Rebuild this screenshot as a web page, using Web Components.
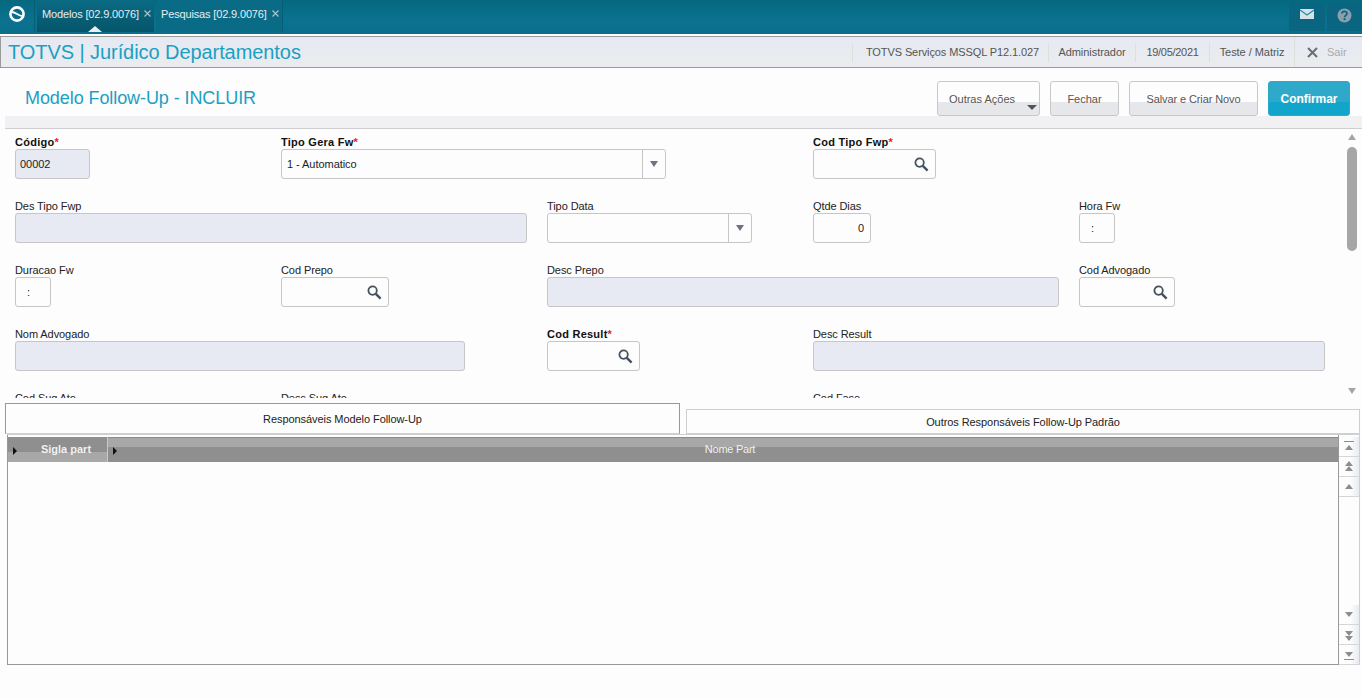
<!DOCTYPE html>
<html lang="pt">

<head>
  <meta charset="UTF-8">
  <title>TOTVS | Jurídico Departamentos</title>
  <style>
    html, body {
      margin: 0;
      height: 699px;
      overflow: hidden;
      background: #fdfdfd;
      font-family: "Liberation Sans", Arial, sans-serif;
    }
  </style>
</head>

<body>

  <top-bar>
    <nav-tab active>Modelos [02.9.0076]</nav-tab>
    <nav-tab>Pesquisas [02.9.0076]</nav-tab>
  </top-bar>

  <title-strip heading="TOTVS | Jurídico Departamentos">
    <strip-item style="width:196px;padding-left:4px;letter-spacing:-0.1px">TOTVS Serviços MSSQL P12.1.027</strip-item>
    <strip-item style="width:87px">Administrador</strip-item>
    <strip-item style="width:74px;letter-spacing:-0.3px">19/05/2021</strip-item>
    <strip-item style="width:85px">Teste / Matriz</strip-item>
  </title-strip>

  <page-header heading="Modelo Follow-Up - INCLUIR">
    <tool-button menu style="width:103px">Outras Ações</tool-button>
    <tool-button style="width:69px">Fechar</tool-button>
    <tool-button style="width:129px;letter-spacing:-0.1px">Salvar e Criar Novo</tool-button>
    <tool-button primary style="width:82px">Confirmar</tool-button>
  </page-header>

  <form-panel>
    <form-field label="Código" required disabled value="00002" width="75"></form-field>
    <form-field label="Tipo Gera Fw" required type="select" value="1 - Automatico" width="385" style="grid-column:2 / span 2"></form-field>
    <form-field label="Cod Tipo Fwp" required type="search" width="123" style="grid-column:4 / span 2"></form-field>

    <form-field label="Des Tipo Fwp" disabled width="512" style="grid-column:1 / span 2"></form-field>
    <form-field label="Tipo Data" type="select" width="205"></form-field>
    <form-field label="Qtde Dias" value="0" value-align="right" width="58"></form-field>
    <form-field label="Hora Fw" value=":" indent="7" width="36"></form-field>

    <form-field label="Duracao Fw" value=":" indent="7" width="36"></form-field>
    <form-field label="Cod Prepo" type="search" width="108"></form-field>
    <form-field label="Desc Prepo" disabled width="512" style="grid-column:3 / span 2"></form-field>
    <form-field label="Cod Advogado" type="search" width="96"></form-field>

    <form-field label="Nom Advogado" disabled width="450" style="grid-column:1 / span 2"></form-field>
    <form-field label="Cod Result" required type="search" width="93"></form-field>
    <form-field label="Desc Result" disabled width="512" style="grid-column:4 / span 2"></form-field>

    <form-field label="Cod Sug Ato" width="96"></form-field>
    <form-field label="Desc Sug Ato" disabled width="512" style="grid-column:2 / span 2"></form-field>
    <form-field label="Cod Fase" type="search" width="96"></form-field>
  </form-panel>

  <tab-strip>
    <folder-tab active style="width:675px">Responsáveis Modelo Follow-Up</folder-tab>
    <folder-tab style="width:674px">Outros Responsáveis Follow-Up Padrão</folder-tab>
  </tab-strip>

  <data-grid>
    <grid-head style="width:100px" first>Sigla part</grid-head>
    <grid-head style="flex:1">Nome Part</grid-head>
  </data-grid>

  <script>
    // Cada clase escribe su propio shadow root con el html y los estilos
    class BaseElement extends HTMLElement {
      render(html) {
        this.attachShadow({ mode: 'open' }).innerHTML = html;
      }
    }

    class TopBar extends BaseElement {
      constructor() {
        super();
        this.render(`
          <style>
            :host {
              display: flex;
              height: 34px;
              background: linear-gradient(#05687f, #0a7290 60%, #0a6e8c);
              color: #fff;
            }
            .logo {
              width: 35px;
              height: 32px;
              padding-top: 6px;
              display: flex;
              justify-content: center;
              border-right: 1px solid #075e74;
              margin-right: 2px;
              box-sizing: border-box;
            }
            .tabs { display: flex; gap: 2px; }
            .right { margin-left: auto; display: flex; gap: 2px; }
            .square {
              width: 35px;
              height: 28px;
              margin-top: 3px;
              padding-top: 5px;
              box-sizing: border-box;
              background: #0a6580;
              display: flex;
              justify-content: center;
            }
            .mail { width: 36px; padding-top: 6px; }
          </style>
          <div class="logo">
            <svg width="16" height="16" viewBox="0 0 16 16">
              <circle cx="8" cy="8" r="6.6" fill="none" stroke="#fff" stroke-width="2.6"/>
              <path d="M2.5 6C6 5.5 10 10.5 13.5 10" fill="none" stroke="#fff" stroke-width="2"/>
            </svg>
          </div>
          <div class="tabs"><slot></slot></div>
          <div class="right">
            <div class="square mail">
              <svg width="14" height="10" viewBox="0 0 14 10">
                <path d="M0 0H14V10H0Z" fill="#d5e3e8"/>
                <path d="M0 1L7 6L14 1" fill="none" stroke="#2f8aa3" stroke-width="1.2"/>
              </svg>
            </div>
            <div class="square">
              <svg width="15" height="15" viewBox="0 0 15 15">
                <circle cx="7.5" cy="7.5" r="7" fill="#8a9fae"/>
                <path d="M5 5.6 C5 2.6 10 2.6 10 5.5 C10 7.4 7.6 7.4 7.6 9.2" fill="none" stroke="#0a6580" stroke-width="1.8"/>
                <rect x="6.6" y="10.2" width="2" height="2" fill="#0a6580"/>
              </svg>
            </div>
          </div>
        `);
      }
    }

    class NavTab extends BaseElement {
      constructor() {
        super();
        this.render(`
          <style>
            :host {
              display: block;
              position: relative;
              height: 32px;
              box-sizing: border-box;
              padding: 8px 0 0 5px;
              font-size: 11px;
              letter-spacing: -0.15px;
              color: #e4eef1;
              white-space: nowrap;
              background: #0a6b86;
              border-right: 1px solid #075e74;
              width: 127px;
            }
            :host([active]) {
              width: 117px;
              background: linear-gradient(#0a6b84, #05556a);
              border-right: 0;
            }
            svg {
              position: absolute;
              top: 10px;
              right: 3px;
            }
            .notch { display: none; }
            :host([active]) .notch {
              display: block;
              position: absolute;
              left: 51px;
              bottom: 0;
              width: 0;
              height: 0;
              border: 7px solid transparent;
              border-top: 0;
              border-bottom: 6px solid #e9eef2;
            }
          </style>
          <slot></slot>
          <svg width="7" height="7" viewBox="0 0 7 7">
            <path d="M0.5 0.5L6.5 6.5M6.5 0.5L0.5 6.5" stroke="#a9c6d0" stroke-width="1.1"/>
          </svg>
          <span class="notch"></span>
        `);
      }
    }

    class TitleStrip extends BaseElement {
      constructor() {
        super();
        this.render(`
          <style>
            :host {
              display: flex;
              align-items: center;
              box-sizing: border-box;
              height: 32px;
              margin-top: 2px;
              border: 1px solid #9a9a9a;
              border-width: 1px 0 1px 1px;
              background: linear-gradient(#e6e9f2, #eaecef);
            }
            h1 {
              margin: 0 0 0 7px;
              font-size: 20px;
              letter-spacing: -0.07px;
              font-weight: normal;
              color: #1aa0c4;
              white-space: nowrap;
            }
            .items { margin-left: auto; display: flex; align-items: center; height: 100%; }
            .exit {
              width: 68px;
              height: 100%;
              border-left: 1px solid #d8e2d8;
              display: flex;
              align-items: center;
              box-sizing: border-box;
              padding-left: 12px;
              gap: 9px;
              color: #aaa;
              font-size: 11px;
            }
          </style>
          <h1>${this.getAttribute("heading")}</h1>
          <div class="items">
            <slot></slot>
            <div class="exit">
              <svg width="11" height="11" viewBox="0 0 11 11">
                <path d="M1 1L10 10M10 1L1 10" stroke="#6a6f75" stroke-width="2"/>
              </svg>
              <span>Sair</span>
            </div>
          </div>
        `);
      }
    }

    class StripItem extends BaseElement {
      constructor() {
        super();
        this.render(`
          <style>
            :host {
              display: flex;
              align-items: center;
              justify-content: center;
              box-sizing: border-box;
              height: 19px;
              border-left: 1px solid #d8e2d8;
              font-size: 11px;
              letter-spacing: -0.05px;
              color: #555;
              white-space: nowrap;
            }
          </style>
          <slot></slot>
        `);
      }
    }

    class PageHeader extends BaseElement {
      constructor() {
        super();
        this.render(`
          <style>
            :host {
              display: block;
              position: relative;
              height: 61px;
            }
            .row {
              display: flex;
              align-items: flex-end;
              height: 48px;
              padding-right: 12px;
              background: #fdfdfd;
            }
            h2 {
              margin: 0 auto 7px 25px;
              font-size: 18px;
              letter-spacing: -0.08px;
              font-weight: normal;
              color: #1aa0c4;
            }
            .buttons { display: flex; gap: 10px; }
            .band {
              height: 12px;
              margin-left: 5px;
              background: #f1f1f3;
              border-bottom: 1px solid #cfcfd3;
            }
          </style>
          <div class="row">
            <h2>${this.getAttribute("heading")}</h2>
            <div class="buttons"><slot></slot></div>
          </div>
          <div class="band"></div>
        `);
      }
    }

    class ToolButton extends BaseElement {
      constructor() {
        super();
        this.render(`
          <style>
            :host {
              display: flex;
              position: relative;
              align-items: center;
              justify-content: center;
              box-sizing: border-box;
              height: 35px;
              border: 1px solid #c8c8c8;
              border-radius: 3px;
              font-size: 11px;
              color: #555;
              white-space: nowrap;
              background: linear-gradient(#fdfdfd 60%, #e5e7ea 60%);
            }
            :host([menu]) { padding-right: 13px; }
            :host([primary]) {
              border-color: #2ea8c8;
              background: linear-gradient(#2fa9c9 60%, #12a5cb 60%);
              color: #fff;
              font-size: 12px;
              font-weight: bold;
              letter-spacing: -0.05px;
            }
            .caret {
              position: absolute;
              right: 2px;
              bottom: 5px;
              width: 0;
              height: 0;
              border: 5px solid transparent;
              border-bottom: 0;
              border-top: 5px solid #555;
            }
          </style>
          <slot></slot>
          ${this.hasAttribute("menu") ? '<span class="caret"></span>' : ""}
        `);
      }
    }

    class FormPanel extends BaseElement {
      constructor() {
        super();
        this.render(`
          <style>
            :host {
              display: block;
              position: relative;
              height: 269px;
              overflow: hidden;
            }
            .grid {
              display: grid;
              grid-template-columns: repeat(5, 266px);
              grid-auto-rows: 44px;
              row-gap: 20px;
              padding: 6px 0 0 15px;
            }
            .scroll {
              position: absolute;
              top: 0;
              right: 0;
              bottom: 0;
              width: 20px;
            }
            .up, .down {
              position: absolute;
              left: 6px;
              width: 0;
              height: 0;
              border: 4px solid transparent;
            }
            .up { top: 5px; border-top: 0; border-bottom: 6px solid #a6a6a6; }
            .down { bottom: 4px; border-bottom: 0; border-top: 6px solid #a6a6a6; }
            .thumb {
              position: absolute;
              left: 5px;
              top: 18px;
              width: 10px;
              height: 104px;
              border-radius: 5px;
              background: #a6a6a6;
            }
          </style>
          <div class="grid"><slot></slot></div>
          <div class="scroll">
            <span class="up"></span>
            <span class="thumb"></span>
            <span class="down"></span>
          </div>
        `);
      }
    }

    class FormField extends BaseElement {
      constructor() {
        super();
        const label = this.getAttribute("label");
        const type = this.getAttribute("type");
        const required = this.hasAttribute("required");
        const valueAlign = this.getAttribute("value-align") || "left";
        const indent = this.getAttribute("indent") || 0;
        const value = this.getAttribute("value") || "";

        let extra = "";
        if (type === "select") {
          extra = `<span class="arrow"><i></i></span>`;
        }
        if (type === "search") {
          extra = `<svg class="lens" width="15" height="15" viewBox="0 0 15 15">
              <circle cx="5.6" cy="5.6" r="4.2" fill="none" stroke="#465160" stroke-width="1.8"/>
              <path d="M8.8 8.8L13.6 13.6" stroke="#465160" stroke-width="2.4"/>
            </svg>`;
        }

        this.render(`
          <style>
            :host { display: block; font-size: 11px; color: #222; }
            label {
              display: block;
              height: 14px;
              line-height: 14px;
              white-space: nowrap;
              letter-spacing: -0.08px;
            }
            :host([required]) label { font-weight: bold; color: #111; letter-spacing: 0.25px; }
            b { color: #e8202a; }
            .box {
              display: flex;
              align-items: center;
              position: relative;
              box-sizing: border-box;
              height: 30px;
              width: ${this.getAttribute("width")}px;
              border: 1px solid #c6c6c6;
              border-radius: 3px;
              background: #fdfdfd;
              padding: 0 4px;
            }
            :host([disabled]) .box { background: #e7eaf2; }
            :host([type="select"]) .box { padding-left: 5px; }
            :host([value-align="right"]) .box { padding-right: 6px; }
            .value {
              flex: 1;
              text-align: ${valueAlign};
              padding-left: ${indent}px;
              white-space: nowrap;
              letter-spacing: -0.05px;
            }
            .arrow {
              width: 23px;
              height: 28px;
              box-sizing: border-box;
              margin-right: -4px;
              border-left: 1px solid #c6c6c6;
              display: flex;
              align-items: center;
              justify-content: center;
            }
            .arrow i {
              width: 0;
              height: 0;
              border: 4px solid transparent;
              border-bottom: 0;
              border-top: 6px solid #6d7280;
            }
            .lens { margin-right: 2px; }
          </style>
          <label>${label}${required ? "<b>*</b>" : ""}</label>
          <div class="box">
            <span class="value">${value}</span>
            ${extra}
          </div>
        `);
      }
    }

    class TabStrip extends BaseElement {
      constructor() {
        super();
        this.render(`
          <style>
            :host {
              display: flex;
              align-items: flex-end;
              gap: 6px;
              height: 31px;
              margin: 5px 2px 0 5px;
            }
          </style>
          <slot></slot>
        `);
      }
    }

    class FolderTab extends BaseElement {
      constructor() {
        super();
        this.render(`
          <style>
            :host {
              display: flex;
              align-items: center;
              justify-content: center;
              box-sizing: border-box;
              height: 25px;
              border: 1px solid #cfcfcf;
              background: #fdfdfd;
              font-size: 11px;
              letter-spacing: -0.07px;
              color: #222;
            }
            :host([active]) {
              height: 31px;
              border-color: #999;
              border-bottom: 1px solid #cfcfcf;
            }
          </style>
          <slot></slot>
        `);
      }
    }

    class DataGrid extends BaseElement {
      constructor() {
        super();
        this.render(`
          <style>
            :host {
              display: flex;
              box-sizing: border-box;
              height: 231px;
              margin: 0 2px 0 7px;
              border-right: 1px solid #cfcfcf;
              border-top: 1px solid #cfcfcf;
            }
            .table {
              flex: 1;
              box-sizing: border-box;
              border: 1px solid #999;
              border-top: 0;
              padding-top: 2px;
              background: #fdfdfd;
            }
            .head { display: flex; height: 25px; }
            .scroller {
              width: 20px;
              display: flex;
              flex-direction: column;
              justify-content: space-between;
              padding-top: 2px;
              box-sizing: border-box;
            }
            .set { display: flex; flex-direction: column; }
            scroll-button { height: 20px; }
          </style>
          <div class="table">
            <div class="head"><slot></slot></div>
          </div>
          <div class="scroller">
            <div class="set">
              <scroll-button kind="first"></scroll-button>
              <scroll-button kind="page-up"></scroll-button>
              <scroll-button kind="up"></scroll-button>
            </div>
            <div class="set">
              <scroll-button kind="down"></scroll-button>
              <scroll-button kind="page-down"></scroll-button>
              <scroll-button kind="last"></scroll-button>
            </div>
          </div>
        `);
      }
    }

    class GridHead extends BaseElement {
      constructor() {
        super();
        this.render(`
          <style>
            :host {
              display: flex;
              position: relative;
              align-items: center;
              justify-content: center;
              box-sizing: border-box;
              padding: 0 0 2px 14px;
              font-size: 11px;
              letter-spacing: -0.25px;
              color: #f1f1f1;
              white-space: nowrap;
              background: linear-gradient(#8a8a8a 1px, #a8a8a8 1px, #a8a8a8 10px, #8f8f8f 10px);
            }
            :host([first]) {
              padding-left: 17px;
              letter-spacing: 0;
              font-weight: bold;
              border-right: 1px solid #c8c8c8;
              background: linear-gradient(#8f8f8f 15px, #a8a8a8 15px);
            }
            i {
              position: absolute;
              left: 5px;
              top: 10px;
              width: 0;
              height: 0;
              border: 4px solid transparent;
              border-right: 0;
              border-left: 4px solid #111;
            }
          </style>
          <i></i><slot></slot>
        `);
      }
    }

    class ScrollButton extends BaseElement {
      constructor() {
        super();
        const paths = {
          "first": "M4 4H14V5H4ZM5 13L9 8L13 13Z",
          "page-up": "M5 9L9 4L13 9ZM5 14L9 9L13 14Z",
          "up": "M5 12L9 7L13 12Z",
          "down": "M5 7H13L9 12Z",
          "page-down": "M5 6H13L9 11ZM5 11H13L9 16Z",
          "last": "M5 7H13L9 12ZM4 14H14V15H4Z"
        };
        this.render(`
          <style>
            :host {
              display: block;
              box-sizing: border-box;
              border-bottom: 1px solid #d6d6d6;
              background: linear-gradient(90deg, #fdfdfd 55%, #e8ebf1);
            }
            svg { display: block; margin-left: 1px; }
          </style>
          <svg width="18" height="18" viewBox="0 0 18 18">
            <path d="${paths[this.getAttribute("kind")]}" fill="#8d8d8d"/>
          </svg>
        `);
      }
    }

    customElements.define("scroll-button", ScrollButton);
    customElements.define("top-bar", TopBar);
    customElements.define("nav-tab", NavTab);
    customElements.define("title-strip", TitleStrip);
    customElements.define("strip-item", StripItem);
    customElements.define("page-header", PageHeader);
    customElements.define("tool-button", ToolButton);
    customElements.define("form-panel", FormPanel);
    customElements.define("form-field", FormField);
    customElements.define("tab-strip", TabStrip);
    customElements.define("folder-tab", FolderTab);
    customElements.define("data-grid", DataGrid);
    customElements.define("grid-head", GridHead);
  </script>
</body>

</html>
